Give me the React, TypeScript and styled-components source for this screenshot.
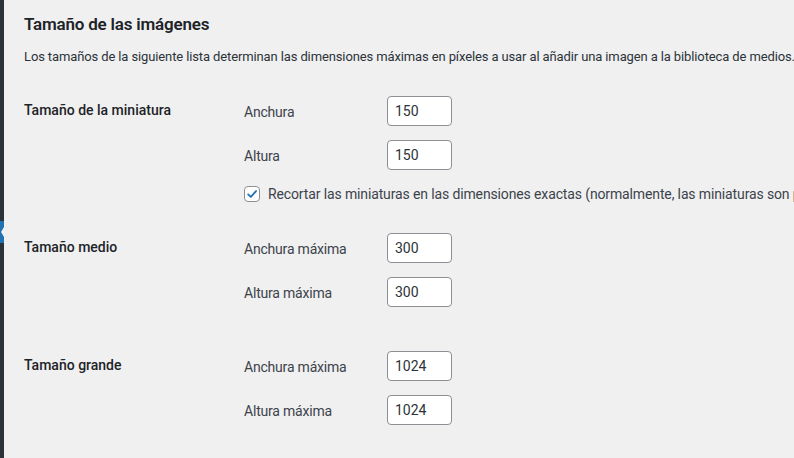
import React from "react";
import styled, { createGlobalStyle } from "styled-components";

const Global = createGlobalStyle`
  html, body { margin: 0; padding: 0; background: #f0f0f1; overflow: hidden; }
  body { font-family: Roboto, "Liberation Sans", Arial, sans-serif; color: #3c434a; }
`;

const Shell = styled.div`
  display: flex;
  width: 794px;
  height: 458px;
  overflow: hidden;
  background: #f0f0f1;
`;

const AdminEdge = styled.div`
  flex: 0 0 4px;
  width: 4px;
  background: #2c3338;
  display: flex;
  flex-direction: column;
  padding-top: 221px;
  box-sizing: border-box;
`;

const MenuCurrent = styled.div`
  height: 22px;
  background: #2271b1;
  display: flex;
  justify-content: flex-end;
  align-items: center;
`;

const MenuArrow = styled.span`
  width: 0;
  height: 0;
  border-top: 5px solid transparent;
  border-bottom: 5px solid transparent;
  border-right: 3px solid #f0f0f1;
`;

const Content = styled.main`
  flex: 1;
  min-width: 0;
  padding: 12px 0 0 20px;
  white-space: nowrap;
`;

const Title = styled.h2`
  margin: 0;
  font-size: 17px;
  line-height: 24px;
  font-weight: 600;
  letter-spacing: -0.2px;
  color: #1d2327;
`;

const Description = styled.p`
  margin: 11px 0 0;
  font-size: 13px;
  line-height: 20px;
  letter-spacing: -0.12px;
  color: #2c3338;
`;

const FormTable = styled.div`
  display: flex;
  flex-direction: column;
  margin-top: 29px;
`;

const SettingRow = styled.section<{ $spaceAfter: number }>`
  display: flex;
  align-items: flex-start;
  margin-bottom: ${(p) => p.$spaceAfter}px;
`;

const RowLabel = styled.div`
  flex: 0 0 220px;
  font-size: 14px;
  font-weight: 500;
  line-height: 28px;
  color: #1d2327;
`;

const Fields = styled.div`
  display: flex;
  flex-direction: column;
  gap: 14px;
`;

const FieldRow = styled.div`
  display: flex;
  align-items: center;
  height: 30px;
`;

const FieldLabel = styled.label`
  flex: 0 0 143px;
  font-size: 14px;
  letter-spacing: -0.2px;
  color: #3c434a;
  padding-top: 2px;
`;

const SizeInput = styled.input`
  box-sizing: border-box;
  width: 65px;
  height: 30px;
  margin: 0;
  padding: 0 7px;
  border: 1px solid #8c8f94;
  border-radius: 4px;
  background: #fff;
  font-family: Roboto, "Liberation Sans", Arial, sans-serif;
  font-size: 14px;
  color: #2c3338;
  outline: none;
`;

const CheckRow = styled.label`
  display: flex;
  align-items: center;
  gap: 8px;
  height: 20px;
  font-size: 14px;
  letter-spacing: -0.13px;
  color: #3c434a;
`;

const CheckBox = styled.span`
  box-sizing: border-box;
  flex: 0 0 16px;
  width: 16px;
  height: 16px;
  border: 1px solid #8c8f94;
  border-radius: 4px;
  background: #fff;
  display: flex;
  align-items: center;
  justify-content: center;
`;

type Field = { label: string; value: string };

const sections: { title: string; fields: Field[]; crop?: boolean; after: number }[] = [
  {
    title: "Tamaño de la miniatura",
    fields: [
      { label: "Anchura", value: "150" },
      { label: "Altura", value: "150" },
    ],
    crop: true,
    after: 29,
  },
  {
    title: "Tamaño medio",
    fields: [
      { label: "Anchura máxima", value: "300" },
      { label: "Altura máxima", value: "300" },
    ],
    after: 44,
  },
  {
    title: "Tamaño grande",
    fields: [
      { label: "Anchura máxima", value: "1024" },
      { label: "Altura máxima", value: "1024" },
    ],
    after: 0,
  },
];

export default function App() {
  return (
    <>
      <Global />
      <Shell>
        <AdminEdge>
          <MenuCurrent>
            <MenuArrow />
          </MenuCurrent>
        </AdminEdge>
        <Content>
          <Title>Tamaño de las imágenes</Title>
          <Description>
            Los tamaños de la siguiente lista determinan las dimensiones máximas en píxeles a usar al añadir una imagen a la biblioteca de medios.
          </Description>
          <FormTable>
            {sections.map((s) => (
              <SettingRow key={s.title} $spaceAfter={s.after}>
                <RowLabel>{s.title}</RowLabel>
                <Fields>
                  {s.fields.map((f) => (
                    <FieldRow key={f.label}>
                      <FieldLabel>{f.label}</FieldLabel>
                      <SizeInput type="text" defaultValue={f.value} />
                    </FieldRow>
                  ))}
                  {s.crop && (
                    <CheckRow>
                      <CheckBox>
                        <svg width="14" height="14" viewBox="0 0 20 20">
                          <path d="M4.5 10.5 L8.3 14.2 L15.8 5.8" fill="none" stroke="#2271b1" strokeWidth="2.6" strokeLinecap="round" strokeLinejoin="round" />
                        </svg>
                      </CheckBox>
                      Recortar las miniaturas en las dimensiones exactas (normalmente, las miniaturas son proporcionales)
                    </CheckRow>
                  )}
                </Fields>
              </SettingRow>
            ))}
          </FormTable>
        </Content>
      </Shell>
    </>
  );
}
